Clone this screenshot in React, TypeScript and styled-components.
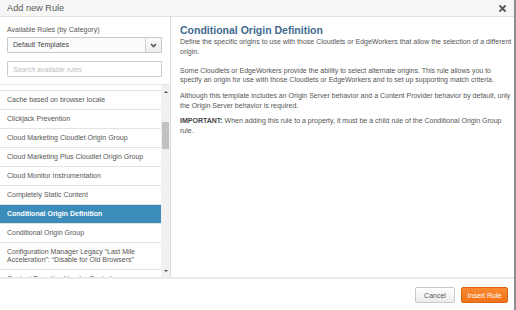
import React, { useLayoutEffect, useRef } from "react";
import styled, { createGlobalStyle } from "styled-components";

const Global = createGlobalStyle`
  html, body { margin: 0; padding: 0; background: #fff; }
  body { font-family: "Liberation Sans", Arial, sans-serif; }
  * { box-sizing: border-box; }
`;

const Modal = styled.div`
  width: 516px;
  height: 310px;
  display: flex;
  flex-direction: column;
  border-right: 2px solid #8e8e8e;
  background: #fff;
  overflow: hidden;
`;

const Header = styled.div`
  height: 17px;
  flex: none;
  display: flex;
  align-items: center;
  justify-content: space-between;
  padding: 0 8px 0 7px;
  background: #f6f6f6;
  border-bottom: 1px solid #e2e2e2;
  color: #5c5c5c;
  font-size: 9.2px;
`;

const CloseButton = styled.span`
  display: flex;
  width: 7px;
  height: 7px;
`;

const Body = styled.div`
  flex: 1;
  min-height: 0;
  display: flex;
`;

const LeftPanel = styled.div`
  width: 171px;
  flex: none;
  display: flex;
  flex-direction: column;
  border-right: 1px solid #dcdcdc;
`;

const Form = styled.div`
  padding: 8px 8px 0 7px;
  display: flex;
  flex-direction: column;
`;

const Label = styled.div`
  font-size: 7px;
  line-height: 9px;
  color: #555;
  margin-bottom: 3px;
`;

const Select = styled.div`
  height: 16px;
  display: flex;
  border: 1px solid #c9c9c9;
  background: #fbfbfb;
  border-radius: 1px;
`;

const SelectValue = styled.div`
  flex: 1;
  padding-left: 5px;
  font-size: 7px;
  line-height: 14px;
  color: #444;
`;

const SelectButton = styled.div`
  width: 16px;
  display: flex;
  align-items: center;
  justify-content: center;
  border-left: 1px solid #d2d2d2;
  background: linear-gradient(#fafafa, #ededed);
`;

const Search = styled.input`
  margin-top: 8px;
  height: 16px;
  border: 1px solid #cccccc;
  border-radius: 1px;
  padding: 0 5px;
  font-family: inherit;
  font-size: 7px;
  color: #444;
  outline: none;
  &::placeholder {
    color: #bdbdbd;
    font-style: italic;
  }
`;

const ListArea = styled.div`
  margin-top: 7px;
  flex: 1;
  min-height: 0;
  display: flex;
  border-top: 1px solid #e8e8e8;
`;

const ListViewport = styled.div`
  flex: 1;
  overflow: hidden;
`;

const Row = styled.div<{ $active?: boolean }>`
  padding: 5px 7px 5px;
  font-size: 7px;
  line-height: 8px;
  border-bottom: 1px solid #e3e3e3;
  color: ${(p) => (p.$active ? "#fff" : "#555")};
  background: ${(p) => (p.$active ? "#3b8cba" : "#fff")};
  font-weight: ${(p) => (p.$active ? "bold" : "normal")};
`;

const Scrollbar = styled.div`
  width: 9px;
  flex: none;
  display: flex;
  flex-direction: column;
  background: #f1f1f1;
`;

const ArrowButton = styled.div`
  height: 13px;
  flex: none;
  display: flex;
  align-items: center;
  justify-content: center;
`;

const Triangle = styled.span<{ $down?: boolean }>`
  width: 0;
  height: 0;
  border-left: 2px solid transparent;
  border-right: 2px solid transparent;
  ${(p) =>
    p.$down ? "border-top: 2.5px solid #505050;" : "border-bottom: 2.5px solid #505050;"}
`;

const Track = styled.div`
  flex: 1;
  display: flex;
  flex-direction: column;
  align-items: center;
`;

const Thumb = styled.div`
  width: 7px;
  height: 27px;
  background: #c1c1c1;
`;

const RightPanel = styled.div`
  flex: 1;
  padding: 7px 1px 0 9px;
`;

const Title = styled.h2`
  margin: 0 0 1px;
  font-size: 10.5px;
  line-height: 12px;
  font-weight: bold;
  color: #3e6a8e;
`;

const Para = styled.p`
  margin: 0 0 6px;
  font-size: 7px;
  line-height: 9.6px;
  color: #555;
  strong {
    color: #444;
  }
`;

const Footer = styled.div`
  height: 33px;
  flex: none;
  display: flex;
  justify-content: flex-end;
  align-items: flex-start;
  gap: 6px;
  padding: 8px 6px 0 0;
  border-top: 2px solid #ebebeb;
`;

const Button = styled.button<{ $primary?: boolean }>`
  height: 16px;
  padding: 0;
  width: ${(p) => (p.$primary ? "47px" : "40px")};
  font-family: inherit;
  font-size: 7px;
  border-radius: 2px;
  border: 1px solid ${(p) => (p.$primary ? "#dc6410" : "#c9c9c9")};
  color: ${(p) => (p.$primary ? "#fff" : "#555")};
  background: ${(p) =>
    p.$primary
      ? "linear-gradient(#f88a30, #f2731a)"
      : "linear-gradient(#ffffff, #ebebeb)"};
`;

const rules = [
  "CORS Support",
  "Cache based on browser locale",
  "Clickjack Prevention",
  "Cloud Marketing Cloudlet Origin Group",
  "Cloud Marketing Plus Cloudlet Origin Group",
  "Cloud Monitor Instrumentation",
  "Completely Static Content",
  "Conditional Origin Definition",
  "Conditional Origin Group",
  "Configuration Manager Legacy “Last Mile Acceleration”: “Disable for Old Browsers”",
  "Content Targeting Header Control",
];

export default function App() {
  const viewport = useRef<HTMLDivElement>(null);
  useLayoutEffect(() => {
    if (viewport.current) viewport.current.scrollTop = 13;
  }, []);

  return (
    <>
      <Global />
      <Modal>
        <Header>
          <span>Add new Rule</span>
          <CloseButton>
            <svg width="7" height="7" viewBox="0 0 7 7">
              <path d="M1 1 L6 6 M6 1 L1 6" stroke="#555" strokeWidth="1.8" strokeLinecap="square" />
            </svg>
          </CloseButton>
        </Header>
        <Body>
          <LeftPanel>
            <Form>
              <Label>Available Rules (by Category)</Label>
              <Select>
                <SelectValue>Default Templates</SelectValue>
                <SelectButton>
                  <svg width="7" height="5" viewBox="0 0 7 5">
                    <path d="M1 1 L3.5 3.5 L6 1" fill="none" stroke="#555" strokeWidth="1.6" />
                  </svg>
                </SelectButton>
              </Select>
              <Search placeholder="Search available rules" />
            </Form>
            <ListArea>
              <ListViewport ref={viewport}>
                {rules.map((r) => (
                  <Row key={r} $active={r === "Conditional Origin Definition"}>
                    {r}
                  </Row>
                ))}
              </ListViewport>
              <Scrollbar>
                <ArrowButton>
                  <Triangle />
                </ArrowButton>
                <Track>
                  <Thumb style={{ marginTop: 24 }} />
                </Track>
                <ArrowButton>
                  <Triangle $down />
                </ArrowButton>
              </Scrollbar>
            </ListArea>
          </LeftPanel>
          <RightPanel>
            <Title>Conditional Origin Definition</Title>
            <Para>
              Define the specific origins to use with those Cloudlets or EdgeWorkers that allow the
              selection of a different origin.
              <br />
              <br />
              Some Cloudlets or EdgeWorkers provide the ability to select alternate origins. This
              rule allows you to specify an origin for use with those Cloudlets or EdgeWorkers and
              to set up supporting match criteria.
            </Para>
            <Para>
              Although this template includes an Origin Server behavior and a Content Provider
              behavior by default, only the Origin Server behavior is required.
            </Para>
            <Para>
              <strong>IMPORTANT:</strong> When adding this rule to a property, it must be a child
              rule of the Conditional Origin Group rule.
            </Para>
          </RightPanel>
        </Body>
        <Footer>
          <Button>Cancel</Button>
          <Button $primary>Insert Rule</Button>
        </Footer>
      </Modal>
    </>
  );
}
